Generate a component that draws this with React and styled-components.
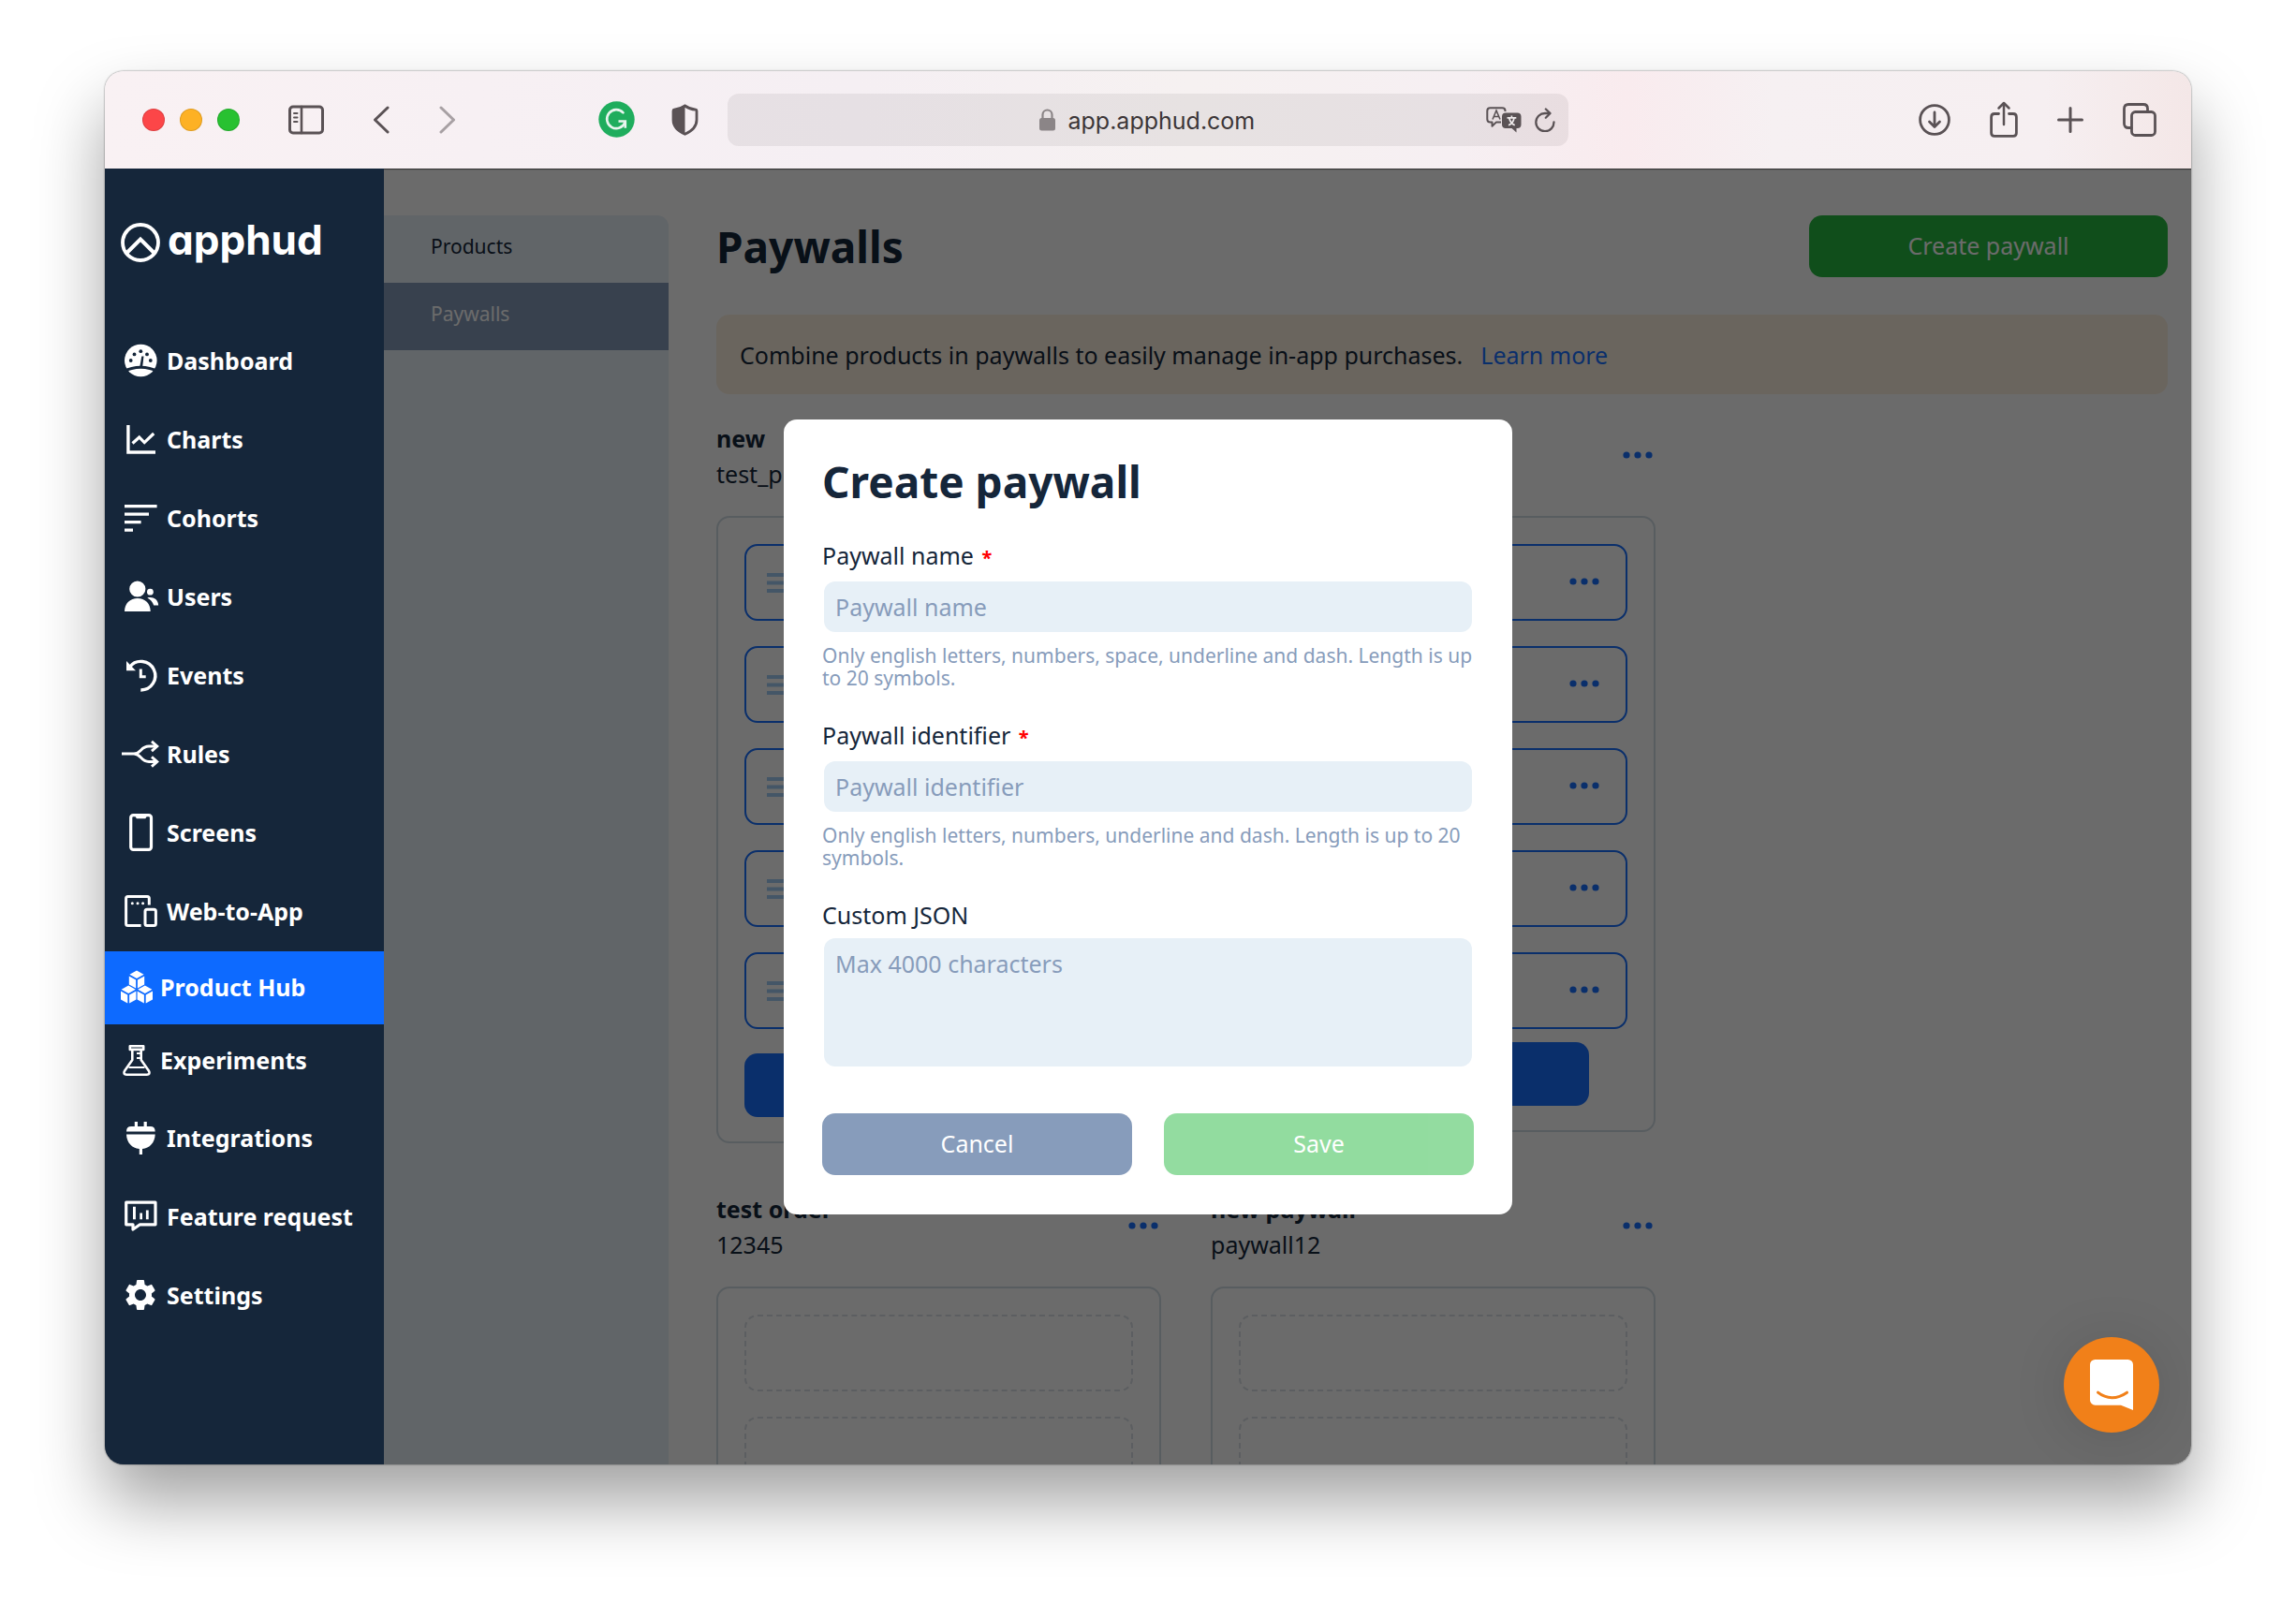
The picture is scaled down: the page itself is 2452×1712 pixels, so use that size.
import React from 'react';
import styled, { createGlobalStyle, css } from 'styled-components';
import { MdSettings } from 'react-icons/md';

const GlobalStyle = createGlobalStyle`
  *, *::before, *::after { box-sizing: border-box; }
  body {
    margin: 0;
    background: #ffffff;
    font-family: 'Noto Sans', 'Open Sans', sans-serif;
    color: #15263a;
  }
  button, input, textarea { font: inherit; color: inherit; margin: 0; }
  button { border: 0; background: none; padding: 0; cursor: pointer; }
  h1, h2, h3, p, ul { margin: 0; padding: 0; }
  ul { list-style: none; }
  svg { display: block; flex: none; }
`;

const colors = {
  navy: '#15263a',
  blue: '#0d6aff',
  accent: '#1a70ff',
  steel: '#879cbb',
  ice: '#e7f0f7',
  green: '#28ba42',
  line: '#d2dde5',
  chrome: '#5a5255',
};

/* ---------- browser window ---------- */

const Desktop = styled.div`
  height: 100vh;
  padding: 76px 112px 148px;
  display: flex;
`;

const BrowserWindow = styled.div`
  flex: 1;
  min-width: 0;
  display: flex;
  flex-direction: column;
  border-radius: 20px;
  overflow: hidden;
  box-shadow: 0 0 2px rgba(0, 0, 0, 0.6), 0 40px 72px rgba(0, 0, 0, 0.37);
`;

const Toolbar = styled.header`
  position: relative;
  z-index: 1;
  flex: none;
  height: 104px;
  padding: 0 37px;
  display: grid;
  grid-template-columns: 1fr minmax(0, 898px) 1fr;
  align-items: center;
  column-gap: 31px;
  color: ${colors.chrome};
  background: linear-gradient(90deg, #f9f1f3 0%, #f5eff3 36%, #f6f1f1 52%, #f6eff2 65%, #f9ebee 73%, #f6f0f2 80%, #f6eff1 93%, #f4e7e7 100%);
  box-shadow: 0 1px 1px rgba(0, 0, 0, 0.5);
`;

const ToolbarSide = styled.div`
  display: flex;
  align-items: center;
  justify-content: ${(p) => (p.$end ? 'flex-end' : 'space-between')};
  gap: 42px;
  padding-left: 3px;
`;

const ToolGroup = styled.div`
  display: flex;
  align-items: center;
  gap: ${(p) => p.$gap}px;
`;

const Light = styled.button`
  width: 24px;
  height: 24px;
  border-radius: 50%;
  background: ${(p) => p.$color};
  box-shadow: inset 0 0 0 1px rgba(0, 0, 0, 0.12);
`;

const ToolButton = styled.button`
  display: flex;
  padding-bottom: 1px;
  opacity: ${(p) => (p.disabled ? 0.5 : 1)};
`;

const AddressBar = styled.div`
  height: 56px;
  padding: 0 14px;
  border-radius: 12px;
  background: rgba(60, 45, 50, 0.08);
  display: grid;
  grid-template-columns: 1fr auto 1fr;
  align-items: center;
`;

const Address = styled.label`
  grid-column: 2;
  display: flex;
  align-items: center;
  gap: 14px;
  color: #8b8587;
`;

const AddressInput = styled.input`
  width: 202px;
  height: 34px;
  padding: 2px 0 0;
  border: 0;
  outline: 0;
  background: none;
  font: 25px/32px Inter, sans-serif;
  color: #3c3638;
`;

const AddressTools = styled.div`
  display: flex;
  justify-content: flex-end;
  align-items: center;
  gap: 14px;
`;

/* ---------- application shell ---------- */

const Viewport = styled.div`
  position: relative;
  flex: 1;
  min-height: 0;
  display: flex;
  background: #ffffff;
`;

const Sidebar = styled.aside`
  position: relative;
  z-index: 2;
  flex: none;
  width: 298px;
  background: ${colors.navy};
  color: #ffffff;
`;

const Logo = styled.a`
  display: flex;
  align-items: center;
  gap: 8px;
  height: 58px;
  margin: 50px 0 56px;
  padding-left: 17px;
  color: inherit;
  text-decoration: none;
`;

const Wordmark = styled.span`
  padding-bottom: 6px;
  font: 700 44px/52px Inter, sans-serif;
  font-feature-settings: 'cv11';
`;

const NavGroup = styled.ul`
  & + & { padding-top: 2px; }
`;

const NavLink = styled.a`
  display: flex;
  align-items: center;
  gap: 8px;
  height: 84px;
  padding: 0 0 2px 18px;
  color: inherit;
  text-decoration: none;
  font-size: 25px;
  font-weight: 700;
  line-height: 32px;
  background: ${(p) => (p.$active ? colors.blue : 'transparent')};
  ${(p) => p.$dense && css`
    height: 78px;
    gap: 5px;
    padding-left: 14px;
  `}
`;

const SubNav = styled.nav`
  flex: none;
  width: 304px;
  margin-top: 50px;
  background: ${colors.ice};
  border-top-right-radius: 12px;
  overflow: hidden;
`;

const SubLink = styled.a`
  display: flex;
  align-items: center;
  height: 72px;
  padding: 0 0 6px 50px;
  font-size: 21px;
  line-height: 28px;
  text-decoration: none;
  color: ${(p) => (p.$active ? '#ffffff' : colors.navy)};
  background: ${(p) => (p.$active ? colors.steel : 'transparent')};
`;

const Main = styled.main`
  flex: 1;
  min-width: 0;
  overflow: hidden;
  padding: 50px 25px 0 51px;
`;

const PageHead = styled.div`
  display: flex;
  align-items: center;
  justify-content: space-between;
`;

const Heading = styled.h1`
  font-size: 46px;
  line-height: 54px;
  font-weight: 700;
`;

const Button = styled.button`
  height: 66px;
  width: ${(p) => p.$width || 'auto'};
  padding-bottom: 2px;
  border-radius: 14px;
  background: ${(p) => p.$color};
  color: #ffffff;
  font-size: 25px;
  line-height: 32px;
  &:disabled { opacity: 0.5; }
`;

const Notice = styled.div`
  display: flex;
  align-items: center;
  gap: 19px;
  height: 85px;
  margin-top: 40px;
  padding: 0 25px;
  border-radius: 14px;
  background: #fdf0e0;
  font-size: 25px;
  line-height: 32px;
`;

const NoticeLink = styled.a`
  color: ${colors.accent};
  text-decoration: none;
`;

/* ---------- paywall cards ---------- */

const PaywallGrid = styled.div`
  display: grid;
  grid-template-columns: repeat(2, minmax(0, 475px));
  align-items: start;
  gap: 51px 53px;
  margin-top: 28px;
`;

const PaywallHead = styled.div`
  display: flex;
  align-items: center;
  justify-content: space-between;
  height: 76px;
  margin-bottom: 26px;
  padding-right: 3px;
  font-size: 25px;
  line-height: 38px;
`;

const PaywallName = styled.h3`
  font-size: 25px;
  line-height: 38px;
  font-weight: 700;
`;

const Card = styled.div`
  display: flex;
  flex-direction: column;
  gap: 27px;
  padding: 28px 28px 26px;
  border: 2px solid ${colors.line};
  border-radius: 14px;
`;

const Row = styled.div`
  display: flex;
  align-items: center;
  justify-content: space-between;
  height: 82px;
  padding: 0 28px 0 22px;
  border: 2px solid ${colors.accent};
  border-radius: 14px;
`;

const MoreButton = styled.button`
  padding-bottom: 3px;
`;

const EmptyRow = styled.div`
  height: 82px;
  border: 2px dashed #dbe0e6;
  border-radius: 14px;
`;

const AddButton = styled.button`
  width: 374px;
  height: 68px;
  margin-top: ${(p) => (p.$tight ? -13 : -1)}px;
  border-radius: 14px;
  background: ${colors.accent};
`;

/* ---------- modal ---------- */

const Overlay = styled.div`
  position: absolute;
  inset: 0;
  z-index: 1;
  display: flex;
  align-items: center;
  justify-content: center;
  background: rgba(0, 0, 0, 0.58);
`;

const ModalLayer = styled(Overlay)`
  z-index: 3;
  background: none;
  pointer-events: none;
`;

const Modal = styled.form`
  width: 778px;
  padding: 40px 41px 42px;
  border-radius: 14px;
  background: #ffffff;
  pointer-events: auto;
`;

const ModalTitle = styled.h2`
  margin-bottom: 37px;
  font-size: 46px;
  line-height: 52px;
  font-weight: 700;
`;

const Field = styled.div`
  display: flex;
  flex-direction: column;
  & + & { margin-top: ${(p) => (p.$compact ? 33 : 40)}px; }
`;

const Label = styled.label`
  margin-bottom: 9px;
  font-size: 25px;
  line-height: 32px;
`;

const Required = styled.span`
  margin-left: 2px;
  color: #ff0000;
  font-size: 20px;
  font-weight: 700;
`;

const control = css`
  display: block;
  margin: 0 2px;
  padding: 0 12px;
  border: 0;
  border-radius: 12px;
  background: ${colors.ice};
  font-size: 25px;
  line-height: 32px;
  outline: 0;
  resize: none;
  &::placeholder { color: ${colors.steel}; opacity: 1; }
`;

const TextInput = styled.input`
  ${control}
  height: 54px;
`;

const TextArea = styled.textarea`
  ${control}
  height: 137px;
  padding: 11px 12px;
`;

const Hint = styled.p`
  margin-top: 13px;
  font-size: 21px;
  line-height: 24px;
  color: ${colors.steel};
`;

const ModalActions = styled.div`
  display: grid;
  grid-template-columns: 1fr 1fr;
  gap: 34px;
  margin-top: 50px;
`;

const ChatButton = styled.button`
  position: absolute;
  right: 34px;
  bottom: 34px;
  z-index: 4;
  display: flex;
  align-items: center;
  justify-content: center;
  width: 102px;
  height: 102px;
  border-radius: 50%;
  background: #f18019;
  box-shadow: 0 4px 60px rgba(0, 0, 0, 0.12);
`;

/* ---------- icons ---------- */

function Stroke({ w = 34, h = 34, sw = 3, children }) {
  return (
    <svg width={w} height={h} viewBox={`0 0 ${w} ${h}`} fill="none" stroke="currentColor" strokeWidth={sw} strokeLinecap="round" strokeLinejoin="round" aria-hidden="true">
      {children}
    </svg>
  );
}

function NavIcon({ children }) {
  return (
    <svg width="40" height="40" viewBox="0 0 40 40" fill="none" aria-hidden="true">
      {children}
    </svg>
  );
}

const Dots = () => (
  <svg width="32" height="8" viewBox="0 0 32 8" fill={colors.accent} aria-hidden="true">
    <circle cx="4" cy="4" r="3.6" />
    <circle cx="16" cy="4" r="3.6" />
    <circle cx="28" cy="4" r="3.6" />
  </svg>
);

const Handle = () => (
  <svg width="28" height="21" viewBox="0 0 28 21" fill="#a2cdf5" aria-hidden="true">
    <path d="M0 0h28v4H0zM0 8.500h28v4H0zM0 17h28v4H0z" />
  </svg>
);

const Cube = ({ x, y }) => (
  <g transform={`translate(${x} ${y})`} fill="#fff">
    <path d="M0 0 7.600 4.200 0 8.400-7.600 4.200z" />
    <path d="M-8.200 6-.9 10v9l-7.300-4z" />
    <path d="M8.200 6 .9 10v9l7.300-4z" />
  </g>
);

const icons = {
  dashboard: (
    <NavIcon>
      <circle cx="20.3" cy="20" r="17.3" fill="#fff" />
      <path d="M1 32Q20.3 22.500 39.600 32" stroke={colors.navy} strokeWidth="3" />
      <g fill={colors.navy}>
        <circle cx="9.7" cy="20" r="1.900" />
        <circle cx="13.500" cy="13.400" r="1.900" />
        <circle cx="20.300" cy="10.200" r="1.900" />
        <circle cx="27" cy="13.400" r="1.900" />
        <circle cx="30.800" cy="20" r="1.900" />
        <path d="M21.300 15.500h2.200l-1.400 12h-3z" />
      </g>
    </NavIcon>
  ),
  charts: (
    <NavIcon>
      <g stroke="#fff">
        <path d="M6.900 5v29H36" strokeWidth="3.400" />
        <path d="m11.500 24.500 7.200-6.500 5.500 5.600L34.200 14" strokeWidth="3.200" />
      </g>
    </NavIcon>
  ),
  cohorts: (
    <NavIcon>
      <path d="M3 6h34.600v3.200H3zM3 14.600h26v3.200H3zM3 23h17.600v3.200H3zM3 31.600h9v3.200H3z" fill="#fff" />
    </NavIcon>
  ),
  users: (
    <NavIcon>
      <g fill="#fff">
        <circle cx="16.800" cy="12" r="8.600" />
        <path d="M3 36c0-8.500 6-14 13.900-14s13.800 5.500 13.800 14z" />
        <circle cx="30.400" cy="15.200" r="3.400" />
        <path d="M27.300 21.500c5.500-1.600 11.500 1 11.900 8h-5c-1.200-3.500-3.500-6.200-6.900-8z" />
      </g>
    </NavIcon>
  ),
  events: (
    <NavIcon>
      <path d="M8.500 11.200A15.300 15.300 0 1 1 20.300 36" stroke="#fff" strokeWidth="3.400" />
      <path d="M5 5v10.200h10z" fill="#fff" />
      <path d="M20.300 13.500v8.200h5.400" stroke="#fff" strokeWidth="3" />
    </NavIcon>
  ),
  rules: (
    <NavIcon>
      <g stroke="#fff" strokeWidth="2.900">
        <path d="M0 20h13c8 0 7-8 16-8h8M13 20c8 0 7 8.500 16 8.500h8" />
        <path d="m32 6.800 5.800 5.200-5.800 5.200M32 23.300l5.800 5.200-5.800 5.200" />
      </g>
    </NavIcon>
  ),
  screens: (
    <NavIcon>
      <rect x="9.700" y="1.700" width="21.800" height="36.600" rx="2.600" stroke="#fff" strokeWidth="3.200" />
      <path d="M14 2h13.200l-1.800 3.200h-9.600z" fill="#fff" />
    </NavIcon>
  ),
  web: (
    <NavIcon>
      <g stroke="#fff" strokeWidth="3">
        <path d="M29.300 13.500V6.500a2 2 0 0 0-2-2H6.600a2 2 0 0 0-2 2v27a2 2 0 0 0 2 2h14" />
        <rect x="25" y="18.300" width="11.400" height="17.200" rx="2" />
      </g>
      <g fill="#fff">
        <circle cx="11.300" cy="11.800" r="1.500" />
        <circle cx="17" cy="11.800" r="1.500" />
        <circle cx="22.600" cy="11.800" r="1.500" />
      </g>
    </NavIcon>
  ),
  hub: (
    <NavIcon>
      <Cube x={20} y={2.500} />
      <Cube x={11.200} y={18.500} />
      <Cube x={28.800} y={18.500} />
    </NavIcon>
  ),
  experiments: (
    <NavIcon>
      <g stroke="#fff" strokeWidth="2.600" strokeLinejoin="round">
        <path d="M12.800 5.300h14.400v3.600H12.800zM15.300 9v11L7.200 31.500c-1.600 2.600-.6 4.200 2 4.200h21.600c2.600 0 3.600-1.600 2-4.200L24.700 20V9" />
        <path d="M11.500 28h17M20 13h4.500M20 18h4.500" strokeWidth="2.200" />
      </g>
    </NavIcon>
  ),
  integrations: (
    <NavIcon>
      <path d="M13.800 3h3.200v5h6.600V3h3.200v5h3.700c3.500 0 5.200 1.800 5.200 5.500H5C5 9.800 6.700 8 10.200 8h3.600zM5 16.500h30.700c-.3 9-6 14.800-13.700 15.500v6h-3.200v-6C11 31.300 5.300 25.500 5 16.500z" fill="#fff" />
    </NavIcon>
  ),
  feature: (
    <NavIcon>
      <path d="M4.700 5.200H36v23.600H19.500L12 34v-5.200H4.700z" stroke="#fff" strokeWidth="3.200" strokeLinejoin="round" />
      <path d="M12 9.800h2.900v13.400H12zM19.300 16.600h2.700v6.600h-2.700zM25.900 13.400h2.800v9.800h-2.800z" fill="#fff" />
    </NavIcon>
  ),
  settings: <MdSettings size={40} aria-hidden="true" />,
};

/* ---------- data ---------- */

const nav = [
  [
    ['dashboard', 'Dashboard'],
    ['charts', 'Charts'],
    ['cohorts', 'Cohorts'],
    ['users', 'Users'],
    ['events', 'Events'],
    ['rules', 'Rules'],
    ['screens', 'Screens'],
    ['web', 'Web-to-App'],
    ['hub', 'Product Hub', true],
    ['experiments', 'Experiments', true],
  ],
  [
    ['integrations', 'Integrations'],
    ['feature', 'Feature request'],
    ['settings', 'Settings'],
  ],
];

const paywalls = [
  { id: 'a', name: 'new', identifier: 'test_p', rows: 5 },
  { id: 'b', name: '', identifier: '', rows: 5, tight: true },
  { id: 'c', name: 'test order', identifier: '12345', rows: 0 },
  { id: 'd', name: 'new paywall', identifier: 'paywall12', rows: 0 },
];

function BrowserToolbar() {
  return (
    <Toolbar>
      <ToolbarSide>
        <ToolGroup $gap={52}>
          <ToolGroup $gap={16}>
            <Light $color="#fc4648" aria-label="Close" />
            <Light $color="#fdb124" aria-label="Minimise" />
            <Light $color="#28c131" aria-label="Zoom" />
          </ToolGroup>
          <ToolButton aria-label="Show sidebar">
            <Stroke w={38} h={32}>
              <rect x="1.500" y="2" width="35" height="28" rx="3.500" />
              <path d="M14 2v28" strokeWidth="2.600" />
              <path d="M6 9h3.500M6 13.500h3.500M6 18h3.500" strokeWidth="2" />
            </Stroke>
          </ToolButton>
          <ToolGroup $gap={53}>
            <ToolButton aria-label="Back">
              <Stroke w={18} h={30}><path d="M16 2 2.500 15 16 28" /></Stroke>
            </ToolButton>
            <ToolButton aria-label="Forward" disabled>
              <Stroke w={18} h={30}><path d="M2 2l13.500 13L2 28" /></Stroke>
            </ToolButton>
          </ToolGroup>
        </ToolGroup>
        <ToolGroup $gap={39}>
          <ToolButton aria-label="Grammar check">
            <svg width="39" height="39" viewBox="0 0 39 39" fill="none" aria-hidden="true">
              <circle cx="19.500" cy="19.500" r="19.200" fill="#1fad5d" />
              <path d="M26.500 12.300a10 10 0 1 0 2 10.500" stroke="#e8f5ee" strokeWidth="2.600" strokeLinecap="round" />
              <path d="M21.500 21.500h7.300v7.300" stroke="#e8f5ee" strokeWidth="2.600" />
            </svg>
          </ToolButton>
          <ToolButton aria-label="Privacy report">
            <svg width="29" height="34" viewBox="0 0 29 34" fill="none" aria-hidden="true">
              <path d="M14.500 2c3 2.200 7 3.800 11.500 4.200.6.100 1 .5 1 1.200v9.600c0 7-5 12-12.500 15.200C7 29 2 24 2 17V7.400c0-.7.400-1.100 1-1.200C7.500 5.800 11.500 4.200 14.500 2z" stroke="currentColor" strokeWidth="2.800" />
              <path d="M14.500 2v30.200C7 29 2 24 2 17V7.400c0-.7.400-1.100 1-1.200C7.500 5.800 11.500 4.200 14.500 2z" fill="currentColor" />
            </svg>
          </ToolButton>
        </ToolGroup>
      </ToolbarSide>
      <AddressBar>
        <Address>
          <svg width="17" height="24" viewBox="0 0 17 24" fill="none" aria-hidden="true">
            <rect y="10" width="17" height="13.500" rx="2.500" fill="currentColor" />
            <path d="M3.500 11V6.500a5 5 0 0 1 10 0V11" stroke="currentColor" strokeWidth="2.200" />
          </svg>
          <AddressInput aria-label="Address" defaultValue="app.apphud.com" />
        </Address>
        <AddressTools>
          <ToolButton aria-label="Translate">
            <svg width="38" height="28" viewBox="0 0 38 28" fill="none" aria-hidden="true">
              <path d="M20.500 5V4.500c0-2-1.200-3.200-3.200-3.200H4.500c-2 0-3.200 1.200-3.200 3.200v8.700c0 2 1.200 3.200 3.200 3.200h2v4.300l4.500-4.300h5" stroke="currentColor" strokeWidth="2" strokeLinejoin="round" />
              <path d="m7 13.500 4-9.500 4 9.500M8.300 10.500h5.400" stroke="currentColor" strokeWidth="1.600" />
              <path d="M21 6.500h12.500c2.500 0 4 1.400 4 4V19c0 2.500-1.500 4-4 4h-1v4.500L27.500 23H21c-2.500 0-4-1.500-4-4v-8.500c0-2.600 1.500-4 4-4z" fill="currentColor" />
              <path d="M22.500 11.800h9.800M27.400 9.500v2.300M24 19.800c3.500-1.500 5.500-4.500 6-8M24.700 12c.8 3.500 2.800 6.300 6 7.800" stroke="#eeeaeb" strokeWidth="1.700" />
            </svg>
          </ToolButton>
          <ToolButton aria-label="Reload">
            <Stroke w={22} h={26} sw={2.300}>
              <path d="M20.500 15.500A9.600 9.600 0 1 1 11 6h5" />
              <path d="m11.800 1.500 4.700 4.500-4.700 4.700" />
            </Stroke>
          </ToolButton>
        </AddressTools>
      </AddressBar>
      <ToolbarSide $end>
        <ToolButton aria-label="Downloads">
          <Stroke w={34} h={34} sw={2.800}>
            <circle cx="17" cy="17" r="15.400" />
            <path d="M17 9v15.500M11.500 19l5.500 5.500 5.500-5.500" />
          </Stroke>
        </ToolButton>
        <ToolButton aria-label="Share">
          <Stroke w={30} h={42} sw={2.800}>
            <path d="M9.500 14.500H5c-2.200 0-3.400 1.200-3.400 3.400V35c0 2.200 1.200 3.400 3.400 3.400h20c2.200 0 3.400-1.200 3.400-3.400V17.900c0-2.200-1.200-3.400-3.400-3.400h-4.500" />
            <path d="M15 26V3.500M9.500 8.500 15 3l5.500 5.500" strokeWidth="2.500" />
          </Stroke>
        </ToolButton>
        <ToolButton aria-label="New tab">
          <Stroke w={28} h={28}><path d="M14 1.500v25M1.500 14h25" /></Stroke>
        </ToolButton>
        <ToolButton aria-label="Tab overview">
          <Stroke w={36} h={36} sw={2.800}>
            <rect x="9.500" y="9.500" width="25" height="25" rx="4" />
            <path d="M9 26.500H6c-2.800 0-4.500-1.500-4.500-4.500V6c0-3 1.700-4.500 4.500-4.500h16c2.800 0 4.500 1.500 4.500 4.500v3" />
          </Stroke>
        </ToolButton>
      </ToolbarSide>
    </Toolbar>
  );
}

function Paywall({ name, identifier, rows, tight }) {
  return (
    <section>
      <PaywallHead>
        <div>
          <PaywallName>{name}</PaywallName>
          <p>{identifier}</p>
        </div>
        <MoreButton type="button" aria-label="Paywall options"><Dots /></MoreButton>
      </PaywallHead>
      <Card>
        {Array.from({ length: rows }, (_, i) => (
          <Row key={i}>
            <Handle />
            <MoreButton type="button" aria-label="Product options"><Dots /></MoreButton>
          </Row>
        ))}
        {rows > 0 && <AddButton type="button" $tight={tight} aria-label="Add product" />}
        {rows === 0 && [0, 1, 2].map((i) => <EmptyRow key={i} />)}
      </Card>
    </section>
  );
}

function CreatePaywallModal() {
  return (
    <ModalLayer>
      <Modal role="dialog" aria-labelledby="modal-title" onSubmit={(e) => e.preventDefault()}>
        <ModalTitle id="modal-title">Create paywall</ModalTitle>
        <Field>
          <Label htmlFor="pw-name">Paywall name <Required>*</Required></Label>
          <TextInput id="pw-name" placeholder="Paywall name" />
          <Hint>Only english letters, numbers, space, underline and dash. Length is up to 20 symbols.</Hint>
        </Field>
        <Field>
          <Label htmlFor="pw-id">Paywall identifier <Required>*</Required></Label>
          <TextInput id="pw-id" placeholder="Paywall identifier" />
          <Hint>Only english letters, numbers, underline and dash. Length is up to 20 symbols.</Hint>
        </Field>
        <Field $compact>
          <Label htmlFor="pw-json">Custom JSON</Label>
          <TextArea id="pw-json" placeholder="Max 4000 characters" />
        </Field>
        <ModalActions>
          <Button type="button" $color={colors.steel}>Cancel</Button>
          <Button type="submit" $color={colors.green} disabled>Save</Button>
        </ModalActions>
      </Modal>
    </ModalLayer>
  );
}

export default function App() {
  return (
    <>
      <GlobalStyle />
      <Desktop>
        <BrowserWindow>
          <BrowserToolbar />
          <Viewport>
            <Sidebar>
              <Logo href="#">
                <Stroke w={42} h={42} sw={3.800}>
                  <circle cx="21" cy="21" r="19" />
                  <path d="M6.500 32 21 17.500 35.500 32" strokeWidth="4" strokeLinecap="butt" strokeLinejoin="miter" />
                </Stroke>
                <Wordmark>apphud</Wordmark>
              </Logo>
              <nav>
                {nav.map((group, g) => (
                  <NavGroup key={g}>
                    {group.map(([icon, label, dense]) => (
                      <li key={icon}>
                        <NavLink href="#" $dense={dense} $active={icon === 'hub'}>
                          {icons[icon]}
                          {label}
                        </NavLink>
                      </li>
                    ))}
                  </NavGroup>
                ))}
              </nav>
            </Sidebar>
            <SubNav>
              <SubLink href="#">Products</SubLink>
              <SubLink href="#" $active>Paywalls</SubLink>
            </SubNav>
            <Main>
              <PageHead>
                <Heading>Paywalls</Heading>
                <Button type="button" $color={colors.green} $width="383px">Create paywall</Button>
              </PageHead>
              <Notice>
                <span>Combine products in paywalls to easily manage in-app purchases.</span>
                <NoticeLink href="#">Learn more</NoticeLink>
              </Notice>
              <PaywallGrid>
                {paywalls.map((p) => <Paywall key={p.id} {...p} />)}
              </PaywallGrid>
            </Main>
            <Overlay />
            <CreatePaywallModal />
            <ChatButton aria-label="Open chat">
              <svg width="46" height="54" viewBox="0 0 46 54" fill="none" aria-hidden="true">
                <path d="M5.500 0h35A5.500 5.500 0 0 1 46 5.500V54l-13-5.300H5.500A5.500 5.500 0 0 1 0 43.200V5.500A5.500 5.500 0 0 1 5.500 0z" fill="#fff" />
                <path d="M8.500 35.200c9 7.300 20.500 7.300 31 0" stroke="#f18019" strokeWidth="3" strokeLinecap="round" />
              </svg>
            </ChatButton>
          </Viewport>
        </BrowserWindow>
      </Desktop>
    </>
  );
}
